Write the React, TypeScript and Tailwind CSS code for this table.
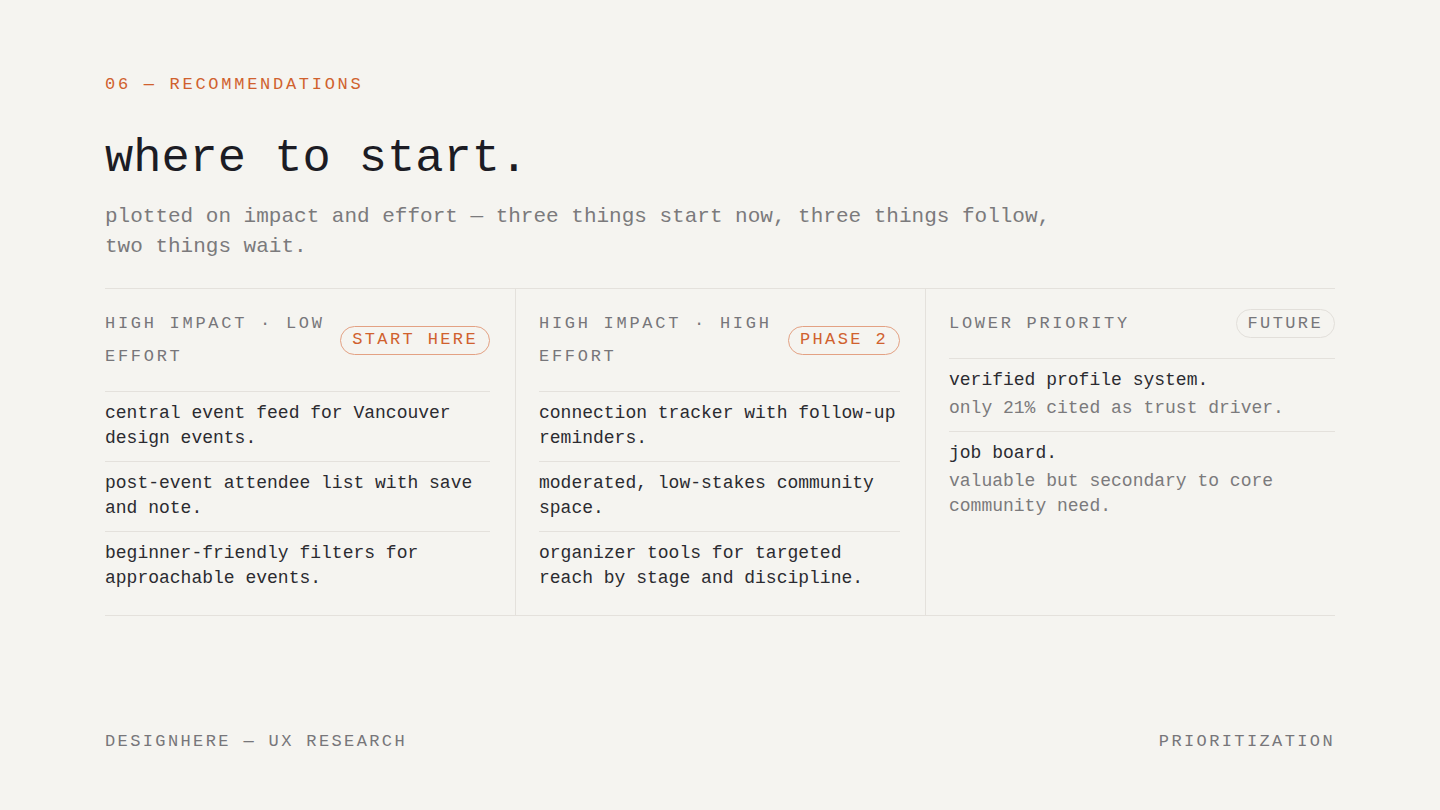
const mono = { fontFamily: '"Liberation Mono", "DejaVu Sans Mono", monospace' };

type Item = { title: string; note?: string };

const columns: {
  label: string;
  badge: string;
  accent: boolean;
  items: Item[];
}[] = [
  {
    label: "HIGH IMPACT · LOW EFFORT",
    badge: "START HERE",
    accent: true,
    items: [
      { title: "central event feed for Vancouver design events." },
      { title: "post-event attendee list with save and note." },
      { title: "beginner-friendly filters for approachable events." },
    ],
  },
  {
    label: "HIGH IMPACT · HIGH EFFORT",
    badge: "PHASE 2",
    accent: true,
    items: [
      { title: "connection tracker with follow-up reminders." },
      { title: "moderated, low-stakes community space." },
      { title: "organizer tools for targeted reach by stage and discipline." },
    ],
  },
  {
    label: "LOWER PRIORITY",
    badge: "FUTURE",
    accent: false,
    items: [
      { title: "verified profile system.", note: "only 21% cited as trust driver." },
      { title: "job board.", note: "valuable but secondary to core community need." },
    ],
  },
];

export default function App() {
  return (
    <div
      className="min-h-screen w-full bg-[#f5f4f0] flex flex-col px-[105px] pt-[73px] pb-[56px]"
      style={mono}
    >
      <div className="text-[17px] leading-[24px] tracking-[0.16em] text-[#d0612e]">
        06 — RECOMMENDATIONS
      </div>

      <h1 className="mt-[34px] text-[47px] leading-[56px] text-[#1c1c24]">where to start.</h1>

      <p className="mt-[15px] text-[21px] leading-[30px] text-[#7b7a7c] max-w-[980px]">
        plotted on impact and effort — three things start now, three things follow, two things wait.
      </p>

      {/* matrix */}
      <div className="mt-[26px] grid grid-cols-3 border-y border-[#e4e1dc]">
        {columns.map((col, i) => (
          <div
            key={col.label}
            className={
              "flex flex-col pb-[14px] " +
              (i === 0 ? "pr-[25px]" : i === 1 ? "border-l border-[#e4e1dc] pl-[23px] pr-[25px]" : "border-l border-[#e4e1dc] pl-[23px]")
            }
          >
            <div className="flex items-center justify-between gap-3 py-[18px] border-b border-[#e4e1dc]">
              <span className="text-[17px] leading-[33px] tracking-[0.16em] text-[#77767a]">{col.label}</span>
              <span
                className={
                  "shrink-0 h-[29px] flex items-center rounded-full px-[11px] text-[17px] tracking-[0.14em] border " +
                  (col.accent ? "border-[#e3a183] text-[#d0612e]" : "border-[#e2dfda] text-[#77767a]")
                }
              >
                {col.badge}
              </span>
            </div>

            {col.items.map((it, j) => (
              <div
                key={it.title}
                className={"pt-[9px] pb-[10px] " + (j > 0 ? "border-t border-[#e4e1dc]" : "")}
              >
                <div className="text-[18px] leading-[25px] text-[#2b2b30]">{it.title}</div>
                {it.note && (
                  <div className="mt-[3px] text-[18px] leading-[25px] text-[#7b7a7c]">{it.note}</div>
                )}
              </div>
            ))}
          </div>
        ))}
      </div>

      <div className="mt-auto flex justify-between text-[17px] leading-[24px] tracking-[0.14em] text-[#77767a]">
        <span>DESIGNHERE — UX RESEARCH</span>
        <span>PRIORITIZATION</span>
      </div>
    </div>
  );
}
